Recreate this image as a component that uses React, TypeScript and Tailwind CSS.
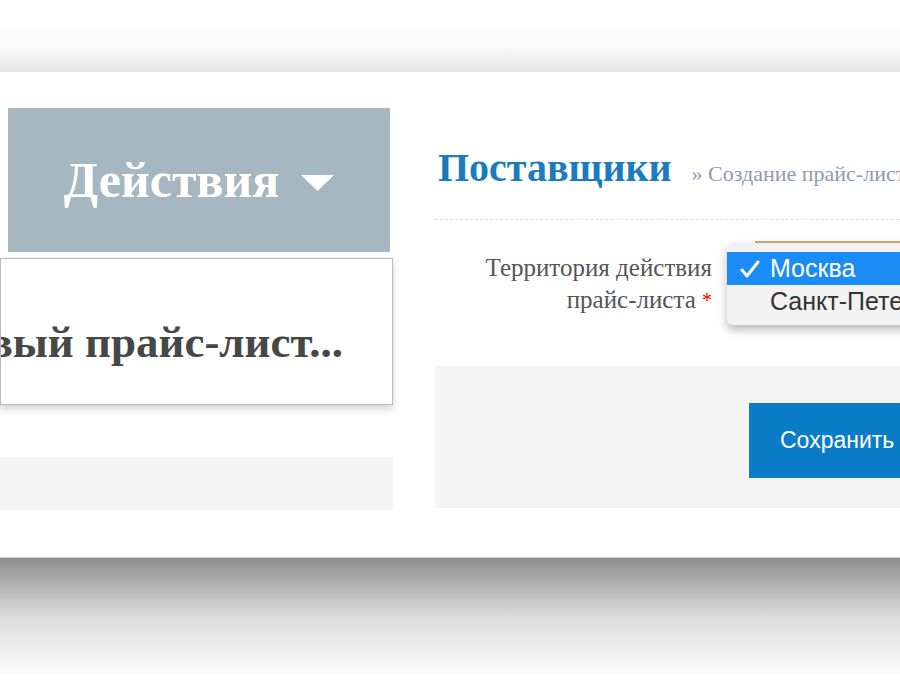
export default function App() {
  const serif = { fontFamily: '"Liberation Serif", "Times New Roman", serif' };
  const sans = { fontFamily: '"Liberation Sans", Arial, sans-serif' };

  return (
    <div className="w-[900px] h-[700px] bg-white overflow-hidden flex flex-col">
      {/* top edge shadow */}
      <div className="h-[25px] shrink-0 bg-white" />
      <div className="h-[47px] shrink-0 bg-gradient-to-b from-white via-[#f9f9f9] to-[#e3e3e3]" />

      {/* collage body */}
      <div className="h-[485px] shrink-0 flex bg-white">
        {/* left: actions menu */}
        <div className="w-[393px] shrink-0 flex flex-col" style={serif}>
          <div className="mt-[36px] ml-[8px] w-[382px] h-[144px] bg-[#a7b7c1] flex items-center justify-center gap-[22px]">
            <span className="text-[50px] font-bold text-white leading-none">Действия</span>
            <svg width="33" height="16" viewBox="0 0 33 16" className="mt-[6px]">
              <polygon points="0,0 33,0 16.5,16" fill="white" />
            </svg>
          </div>
          <div className="mt-[6px] h-[147px] w-[393px] bg-white border border-[#b9b9b9] shadow-[0_4px_8px_rgba(0,0,0,0.18)] overflow-hidden flex items-center justify-end pr-[49px] pt-[22px]">
            <span className="text-[45px] font-bold text-[#474747] leading-none whitespace-nowrap">
              Новый прайс-лист...
            </span>
          </div>
          <div className="mt-[52px] h-[53px] w-[393px] bg-[#f4f4f4]" />
        </div>

        {/* right: supplier form */}
        <div className="ml-[42px] flex-1 flex flex-col">
          <div className="pt-[76px] pl-[3px] pb-[29px] border-b border-dashed border-[#dddddd] flex items-baseline gap-[20px] whitespace-nowrap" style={serif}>
            <span className="text-[40px] font-bold text-[#1a7bbf] leading-[40px]">Поставщики</span>
            <span className="text-[22px] text-[#8c9bb0]">» Создание прайс-листа</span>
          </div>

          <div className="mt-[32px] flex relative">
            <div className="w-[277px] shrink-0 text-right text-[25px] leading-[32px] text-[#555]" style={serif}>
              <div>Территория действия</div>
              <div>
                прайс-листа <span className="text-[#e00] align-top text-[20px]">*</span>
              </div>
            </div>
            <div className="ml-[15px] flex-1 relative">
              <div className="ml-[28px] -mt-[11px] h-[40px] border-t-2 border-[#e0a070]" />
              {/* open select popup */}
              <div
                className="absolute -top-[9px] left-0 w-[220px] h-[82px] rounded-[6px] bg-[#f2f2f2] shadow-[0_5px_10px_rgba(0,0,0,0.28)] pt-[9px] overflow-hidden"
                style={sans}
              >
                <div className="h-[33px] bg-[#1b8cf5] flex items-center text-white text-[25px] leading-none">
                  <svg width="20" height="18" viewBox="0 0 20 18" className="ml-[13px] mr-[10px]">
                    <path d="M2 10 L7 16 L18 2" fill="none" stroke="white" strokeWidth="3" strokeLinecap="round" strokeLinejoin="round" />
                  </svg>
                  <span>Москва</span>
                </div>
                <div className="h-[32px] flex items-center pl-[43px] text-[#333] text-[25px] leading-none whitespace-nowrap">
                  Санкт-Петербург
                </div>
              </div>
            </div>
          </div>

          <div className="mt-[50px] h-[142px] bg-[#f4f4f4] pt-[37px] pl-[314px] overflow-hidden">
            <div className="w-[200px] h-[75px] bg-[#0a7cc8] flex items-center pl-[31px] text-white text-[23px] whitespace-nowrap" style={sans}>
              Сохранить
            </div>
          </div>
        </div>
      </div>

      {/* bottom drop shadow */}
      <div className="h-px shrink-0 bg-[#cfcfcf]" />
      <div className="h-[116px] shrink-0 bg-gradient-to-b from-[#8e8e8e] via-[#dcdcdc] to-[#fbfbfb]" />
      <div className="flex-1 bg-white" />
    </div>
  );
}
